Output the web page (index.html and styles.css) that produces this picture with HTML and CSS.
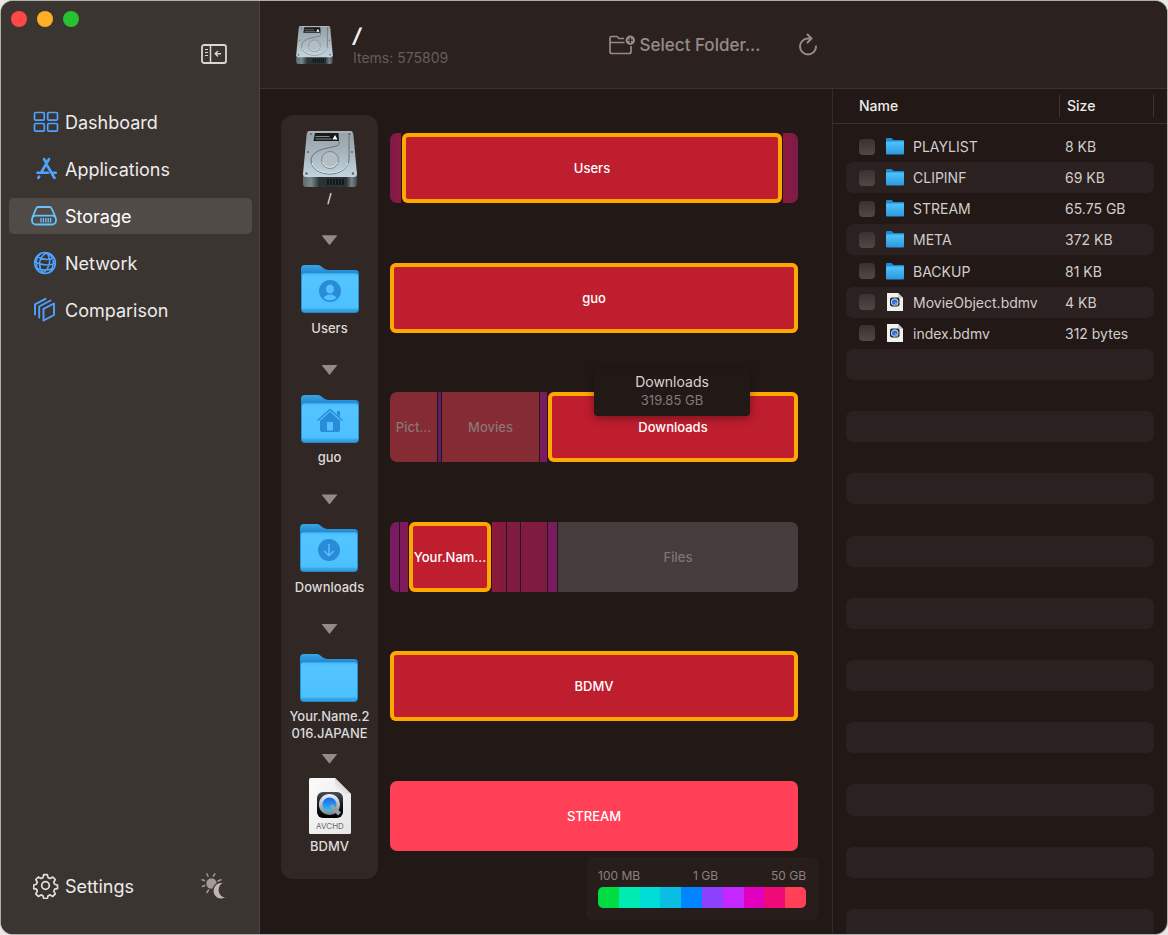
FILE: index.html
```html
<!DOCTYPE html>
<html lang="en">
<head>
<meta charset="utf-8">
<title>Storage</title>
<link rel="stylesheet" href="styles.css">
</head>
<body>
<svg class="defs" aria-hidden="true">
  <defs>
    <linearGradient id="g-plate" x1="0" y1="0" x2="0" y2="1"><stop offset="0" stop-color="#96a0a5"/><stop offset=".5" stop-color="#a9b6be"/><stop offset="1" stop-color="#c2d5de"/></linearGradient>
    <linearGradient id="g-base" x1="0" y1="0" x2="1" y2="0"><stop offset="0" stop-color="#5f6b6e"/><stop offset=".15" stop-color="#7d888b"/><stop offset=".3" stop-color="#2b3335"/><stop offset=".8" stop-color="#2b3335"/><stop offset=".9" stop-color="#76838a"/><stop offset="1" stop-color="#3f494c"/></linearGradient>
    <linearGradient id="g-front" x1="0" y1="0" x2="0" y2="1"><stop offset="0" stop-color="#46b9fb"/><stop offset=".1" stop-color="#53c4ff"/><stop offset=".88" stop-color="#4dc1ff"/><stop offset=".93" stop-color="#35a5e6"/><stop offset="1" stop-color="#2d9add"/></linearGradient>
    <linearGradient id="g-mini" x1="0" y1="0" x2="0" y2="1"><stop offset="0" stop-color="#51c4fb"/><stop offset="1" stop-color="#2b97dd"/></linearGradient>
    <linearGradient id="g-back" x1="0" y1="0" x2="0" y2="1"><stop offset="0" stop-color="#3aa5e4"/><stop offset=".25" stop-color="#1a7fcb"/></linearGradient>
    <linearGradient id="g-page" x1="0" y1="0" x2="1" y2="1"><stop offset="0" stop-color="#fbfbfb"/><stop offset="1" stop-color="#e6e6e6"/></linearGradient>
    <linearGradient id="g-fold" x1="0" y1="1" x2="1" y2="0"><stop offset="0" stop-color="#ffffff"/><stop offset="1" stop-color="#b4b4b4"/></linearGradient>
    <linearGradient id="g-tile" x1="0" y1="0" x2="0" y2="1"><stop offset="0" stop-color="#4a4f55"/><stop offset=".5" stop-color="#15171a"/><stop offset="1" stop-color="#000"/></linearGradient>
    <linearGradient id="g-ring" x1="0" y1="0" x2="0" y2="1"><stop offset="0" stop-color="#e6ebf5"/><stop offset="1" stop-color="#858b91"/></linearGradient>
    <linearGradient id="g-lens" x1="0" y1="0" x2="0" y2="1"><stop offset="0" stop-color="#1a55e8"/><stop offset="1" stop-color="#2fd4f7"/></linearGradient>
    <symbol id="disk" viewBox="0 0 54 56">
      <path d="M0 45h54v8q0 3-3 3H3q-3 0-3-3z" fill="url(#g-base)"/>
      <path d="M25 48v6M28 48v6M31 48v6M34 48v6M37 48v6M40 48v6" stroke="#0b0e0f" stroke-width="1.4"/>
      <path d="M7 0h40q3 0 3.300 3L54 43q0 3-3 3H3q-3 0-3-3L3.700 3Q4 0 7 0z" fill="url(#g-plate)"/>
      <path d="M5 1h44" stroke="#c9d1d4" stroke-width=".8"/>
      <path d="M36 10.500v3C34 17 9 16 8 29c0 9 9 14 19 14s19-6 19-15V2.500" fill="none" stroke="#64717a" stroke-width="1"/>
      <path d="M9 32c2 7 10 10 18 10s16-4 18-10" fill="none" stroke="#dce7ef" stroke-width="1"/>
      <circle cx="27" cy="29" r="8.500" fill="#b2bdc4" stroke="#7b878e"/>
      <path d="M19.500 31a8 8 0 0 0 15 0" fill="none" stroke="#dfe8ee"/>
      <path d="M12 2h23.500l.5 8H10.500z" fill="#17191b"/>
      <path d="M12.500 5.500h14M12.500 8h16" stroke="#868b8e" stroke-width="1"/>
      <path d="M32 4l2.500 4.500h-5z" fill="#fff"/>
      <g fill="#56626a"><circle cx="8" cy="3" r=".9"/><circle cx="46.500" cy="3" r=".9"/><circle cx="5" cy="21" r=".9"/><circle cx="49" cy="21" r=".9"/><circle cx="3.500" cy="42.500" r="1.200"/><circle cx="50" cy="42.500" r="1.200"/></g>
    </symbol>
    <symbol id="folder" viewBox="0 0 58 48">
      <path d="M0 4q0-4 4-4h13q2 0 4 2 3 3 6 3h27q4 0 4 4v34H0z" fill="url(#g-back)"/>
      <path d="M.5 11q0-3 3-3h51q3 0 3 3v33.500q0 3-3 3h-51q-3 0-3-3z" fill="url(#g-front)" stroke="#2690d6" stroke-width=".8"/>
    </symbol>
    <symbol id="folder-mini" viewBox="0 0 18 17">
      <path d="M0 1q0-1 1-1h4.500l2 2H17q1 0 1 1v10H0z" fill="#1f8bd6"/>
      <path d="M0 3.500h18V15.500q0 1-1 1H1q-1 0-1-1z" fill="url(#g-mini)"/>
    </symbol>
    <symbol id="doc" viewBox="0 0 42 56">
      <path d="M1.500 0H26L42 16v38.500q0 1.500-1.500 1.500h-39Q0 56 0 54.500v-53Q0 0 1.500 0z" fill="url(#g-page)"/>
      <path d="M26 0l16 16H28q-2 0-2-2z" fill="url(#g-fold)"/>
      <rect x="8" y="14" width="26" height="26" rx="6" fill="url(#g-tile)"/>
      <circle cx="20.500" cy="26.500" r="8.800" fill="url(#g-lens)" stroke="url(#g-ring)" stroke-width="3.600"/>
      <path d="M22 27.500l8.500 8.500" stroke="#989da3" stroke-width="4"/>
    </symbol>
  </defs>
</svg>

<div class="window">
  <aside class="sidebar">
    <div class="lights"><span class="light red"></span><span class="light amber"></span><span class="light green"></span></div>
    <button class="icon-button collapse" aria-label="Hide sidebar">
      <svg width="26" height="20" viewBox="0 0 26 20" fill="none" stroke="currentColor"><rect x="1" y="1" width="24" height="18" rx="2" stroke-width="1.800"/><path d="M9.500 1v18" stroke-width="1.500"/><path d="M4 5.500h3M4 8.500h3M4 11.500h3" stroke-width="1.200"/><path d="M20 9.800h-5.500M17 7l-2.800 2.800L17 12.600" stroke-width="1.400"/></svg>
    </button>
    <nav class="nav">
      <a class="nav-item" href="#dashboard">
        <svg class="nav-icon" viewBox="0 0 26 26" fill="none" stroke="currentColor" stroke-width="1.700"><rect x="1.500" y="3.500" width="9.800" height="7.600" rx="1.200"/><rect x="14.700" y="3.500" width="9.800" height="7.600" rx="1.200"/><rect x="1.500" y="14.500" width="9.800" height="7.600" rx="1.200"/><rect x="14.700" y="14.500" width="9.800" height="7.600" rx="1.200"/></svg>
        Dashboard</a>
      <a class="nav-item" href="#applications">
        <svg class="nav-icon" viewBox="0 0 26 26" fill="none" stroke="currentColor" stroke-width="2.600" stroke-linecap="round"><path d="M11 3l1.800 3.200M16 3L8.200 16.500M4.500 16.800h10.500M14.200 9.500l7.300 12.500M19.800 16.800h3M6.200 20.500l-.9 1.500"/></svg>
        Applications</a>
      <a class="nav-item active" href="#storage" aria-current="page">
        <svg class="nav-icon drive" viewBox="0 0 26 26" fill="none" stroke="currentColor" stroke-width="1.800" stroke-linejoin="round"><path d="M1.300 14.500L5 5.800Q5.700 4 7.500 4h10.800q1.800 0 2.500 1.800l3.900 8.700"/><rect x="1" y="12.700" width="24" height="8.800" rx="4"/><path d="M10 15v4.500M12.400 15v4.500M14.800 15v4.500M17.200 15v4.500M19.600 15v4.500" stroke-width="1.300"/></svg>
        Storage</a>
      <a class="nav-item" href="#network">
        <svg class="nav-icon" viewBox="0 0 26 26" fill="none" stroke="currentColor" stroke-width="1.500"><circle cx="12" cy="13" r="10.400"/><path d="M14 2.800C5 7 5 17 10 23.200M14 2.800c4 6 4 14-4 20.400M14 2.800c8 4 7 12 4 18.500M4 6.500q9 5 17 1.500M1.600 12q10 5 20.800 1.500M3.500 18.500q9 3 17 0M8 3.500C2 8 3 14 4.500 19.500"/></svg>
        Network</a>
      <a class="nav-item" href="#comparison">
        <svg class="nav-icon" viewBox="0 0 26 26" fill="none" stroke="currentColor" stroke-width="1.900" stroke-linejoin="round" stroke-linecap="round"><path d="M10.500 11.800l10.500-5.300v11.500l-10.500 5.500zM6.200 20.500V9.500L17.500 3.500M2 17.500V7.300L12.500 1.800"/></svg>
        Comparison</a>
    </nav>
    <div class="sidebar-foot">
      <a class="nav-item plain" href="#settings">
        <svg class="nav-icon" viewBox="0 0 26 26" fill="none" stroke="currentColor" stroke-width="1.700" stroke-linejoin="round"><circle cx="12.500" cy="12.500" r="3.800"/><path d="M10.700 1.700h3.600l.8 2.900 2 .9 2.700-1.500 2.500 2.500-1.500 2.700.8 2 2.900.8v3.600l-2.900.6-.8 2 1.500 2.700-2.500 2.500-2.700-1.500-2 .9-.8 2.700h-3.600l-.7-2.700-2-.9-2.700 1.500-2.500-2.500 1.500-2.700-.9-2-2.700-.6v-3.600l2.700-.8.9-2-1.500-2.700 2.500-2.500L8 5.500l2-.9z"/></svg>
        Settings</a>
      <button class="icon-button theme" aria-label="Switch appearance">
        <svg width="26" height="27" viewBox="0 0 26 27"><circle cx="10.500" cy="10.500" r="5.200" fill="#a49a98"/><path d="M7 3.200L6 1M12.500 3L13.800.8M3.500 7.500L1.200 6.800M3.800 12.500L1.500 13.500M7.500 17L6 19.500M17 8l3-1.200" stroke="#a49a98" stroke-width="1.500" stroke-linecap="round"/><path d="M20.500 9.500a8.300 8.300 0 1 0 5.300 14.500C18 25 15 14 23 9.800q-1-.4-2.500-.3z" fill="#c0b5b3" stroke="#3b3532" stroke-width="1.200"/></svg>
      </button>
    </div>
  </aside>

  <div class="main">
    <header class="toolbar">
      <div class="volume">
        <svg class="volume-icon"><use href="#disk"/></svg>
        <div><h1 class="volume-name">/</h1><p class="volume-items">Items: 575809</p></div>
      </div>
      <div class="actions">
        <button class="text-button"><svg width="26" height="20" viewBox="0 0 26 20" fill="none" stroke="currentColor" stroke-width="1.700" stroke-linejoin="round"><path d="M15 3.500H10L8 1.500H2.500Q1 1.500 1 3v13.500q0 2 2 2h17q2 0 2-2V11M1 7.500h14.500"/><circle cx="21.300" cy="5.200" r="4.700" fill="currentColor" stroke="none"/><path d="M21.300 2.500v5.400M18.600 5.200H24" stroke="#2b211f" stroke-width="1.300"/></svg>Select Folder...</button>
        <button class="icon-button reload" aria-label="Reload"><svg width="20" height="24" viewBox="0 0 20 24" fill="none" stroke="currentColor" stroke-width="2" stroke-linecap="round" stroke-linejoin="round"><path d="M13.500 5.500H10A8 8 0 1 0 18 13.500M9.500 1.500l4 4-4 4"/></svg></button>
      </div>
    </header>

    <div class="content">
      <section class="map" aria-label="Disk usage">
        <ol class="rail">
          <li class="level"><span class="level-icon"><svg class="ic-disk"><use href="#disk"/></svg></span><span class="level-name">/</span></li>
          <li class="arrow" aria-hidden="true"></li>
          <li class="level"><span class="level-icon"><svg class="ic-folder" viewBox="0 0 58 48"><use href="#folder" width="58" height="48"/><circle cx="29" cy="26" r="11" fill="#2a8cd8"/><ellipse cx="29" cy="24" rx="4" ry="4.500" fill="#52c3ff"/><path d="M22.500 33q2.500-3.500 6.500-3.500t6.500 3.500q-6.500 4.500-13 0z" fill="#52c3ff"/></svg></span><span class="level-name">Users</span></li>
          <li class="arrow" aria-hidden="true"></li>
          <li class="level"><span class="level-icon"><svg class="ic-folder" viewBox="0 0 58 48"><use href="#folder" width="58" height="48"/><path d="M19 25.500l10-9 10 9V35q0 2-2 2H21q-2 0-2-2z" fill="#2a8cd8"/><path d="M16.500 25.500L29 14.500l12.500 11" fill="none" stroke="#2a8cd8" stroke-width="1.600"/><path d="M19.500 24.700L29 16.300l9.500 8.400" fill="none" stroke="#52c3ff" stroke-width=".8"/><path d="M36 16h3v6l-3-2.500z" fill="#2a8cd8"/><path d="M26 27h6v8.500h-6z" fill="#52c3ff"/></svg></span><span class="level-name">guo</span></li>
          <li class="arrow" aria-hidden="true"></li>
          <li class="level"><span class="level-icon"><svg class="ic-folder" viewBox="0 0 58 48"><use href="#folder" width="58" height="48"/><circle cx="29" cy="26" r="11" fill="#2a8cd8"/><path d="M29 20.500v11M24.500 27.200l4.500 4.500 4.500-4.500" fill="none" stroke="#52c3ff" stroke-width="1.500" stroke-linecap="round"/></svg></span><span class="level-name">Downloads</span></li>
          <li class="arrow" aria-hidden="true"></li>
          <li class="level"><span class="level-icon"><svg class="ic-folder"><use href="#folder"/></svg></span><span class="level-name">Your.Name.2<br>016.JAPANE</span></li>
          <li class="arrow" aria-hidden="true"></li>
          <li class="level"><span class="level-icon"><svg class="ic-doc" viewBox="0 0 42 56"><use href="#doc" width="42" height="56"/><text class="doc-type" x="21" y="51">AVCHD</text></svg></span><span class="level-name">BDMV</span></li>
        </ol>

        <div class="bars">
          <div class="bar"><span class="seg first wine-l" style="flex-grow:11"></span><button class="seg picked" style="flex-grow:380">Users</button><span class="seg last wine-r" style="flex-grow:15"></span></div>
          <div class="bar"><button class="seg picked" style="flex-grow:408">guo</button></div>
          <div class="bar"><button class="seg first dim" style="flex-grow:47">Pict...</button><span class="seg violet" style="flex-grow:3"></span><button class="seg dim" style="flex-grow:97">Movies</button><span class="seg plum" style="flex-grow:7"></span><button class="seg picked" style="flex-grow:250">Downloads</button>
            <div class="tip" role="tooltip"><span class="tip-name">Downloads</span><span class="tip-size">319.85 GB</span></div>
          </div>
          <div class="bar"><span class="seg first plum" style="flex-grow:9"></span><span class="seg plum-r" style="flex-grow:8"></span><button class="seg picked" style="flex-grow:82">Your.Nam...</button><span class="seg wine-l2" style="flex-grow:14"></span><span class="seg wine" style="flex-grow:13"></span><span class="seg wine" style="flex-grow:26"></span><span class="seg plum" style="flex-grow:9"></span><button class="seg last files" style="flex-grow:240">Files</button></div>
          <div class="bar"><button class="seg picked" style="flex-grow:408">BDMV</button></div>
          <div class="bar"><button class="seg first last hot" style="flex-grow:408">STREAM</button></div>
        </div>

        <div class="legend">
          <div class="legend-labels"><span>100 MB</span><span>1 GB</span><span>50 GB</span></div>
          <div class="scale"><i class="c1"></i><i class="c2"></i><i class="c3"></i><i class="c4"></i><i class="c5"></i><i class="c6"></i><i class="c7"></i><i class="c8"></i><i class="c9"></i><i class="c10"></i></div>
        </div>
      </section>

      <section class="files-pane">
        <table class="table">
          <thead><tr><th scope="col">Name</th><th scope="col" class="size">Size</th></tr></thead>
          <tbody>
            <tr><td><label><input type="checkbox"><svg class="mini"><use href="#folder-mini"/></svg>PLAYLIST</label></td><td>8 KB</td></tr>
            <tr><td><label><input type="checkbox"><svg class="mini"><use href="#folder-mini"/></svg>CLIPINF</label></td><td>69 KB</td></tr>
            <tr><td><label><input type="checkbox"><svg class="mini"><use href="#folder-mini"/></svg>STREAM</label></td><td>65.75 GB</td></tr>
            <tr><td><label><input type="checkbox"><svg class="mini"><use href="#folder-mini"/></svg>META</label></td><td>372 KB</td></tr>
            <tr><td><label><input type="checkbox"><svg class="mini"><use href="#folder-mini"/></svg>BACKUP</label></td><td>81 KB</td></tr>
            <tr><td><label><input type="checkbox"><svg class="mini page" viewBox="0 0 16 18"><path d="M0 0h11l5 5v13H0z" fill="#f1f1f1"/><path d="M11 0l5 5h-5z" fill="#cfcfcf"/><rect x="3" y="4.500" width="9.500" height="9" rx="2" fill="#202429"/><circle cx="7.700" cy="9" r="3.200" fill="#1d6ef0" stroke="#bcc5d2" stroke-width="1.200"/><path d="M8 9.500l3 3" stroke="#a5adb7" stroke-width="1.200"/></svg>MovieObject.bdmv</label></td><td>4 KB</td></tr>
            <tr><td><label><input type="checkbox"><svg class="mini page" viewBox="0 0 16 18"><path d="M0 0h11l5 5v13H0z" fill="#f1f1f1"/><path d="M11 0l5 5h-5z" fill="#cfcfcf"/><rect x="3" y="4.500" width="9.500" height="9" rx="2" fill="#202429"/><circle cx="7.700" cy="9" r="3.200" fill="#1d6ef0" stroke="#bcc5d2" stroke-width="1.200"/><path d="M8 9.500l3 3" stroke="#a5adb7" stroke-width="1.200"/></svg>index.bdmv</label></td><td>312 bytes</td></tr>
            <tr></tr><tr></tr><tr></tr><tr></tr><tr></tr><tr></tr><tr></tr><tr></tr><tr></tr><tr></tr><tr></tr><tr></tr><tr></tr><tr></tr><tr></tr><tr></tr><tr></tr><tr></tr><tr></tr>
          </tbody>
        </table>
      </section>
    </div>
  </div>
</div>
</body>
</html>
```

FILE: styles.css
```css
* { box-sizing: border-box; }
body {
  margin: 0;
  padding: 1px;
  height: 100vh;
  overflow: hidden;
  background: #e9e9e8;
  font-family: Inter, "Liberation Sans", sans-serif;
  font-size: 14px;
  color: #d2cdcb;
}
button { border: 0; padding: 0; background: none; font: inherit; color: inherit; }
h1, p, ol { margin: 0; padding: 0; }
a { color: inherit; text-decoration: none; }
svg { flex: none; display: block; }
.defs { position: absolute; width: 0; height: 0; }

.window {
  display: flex;
  height: 100%;
  border-radius: 12px;
  overflow: hidden;
  background: #221917;
  box-shadow: 0 0 0 1px #aeaeac;
}

/* Sidebar */
.sidebar {
  flex: none;
  width: 259px;
  display: flex;
  flex-direction: column;
  background: #3b3532;
  border-right: 1px solid #4a4341;
  padding: 10px 7px 30px 8px;
}
.lights { display: flex; gap: 10px; padding-left: 2px; }
.light { width: 16px; height: 16px; border-radius: 50%; }
.red { background: #ff4747; }
.amber { background: #ffae26; }
.green { background: #29c132; }
.icon-button { display: flex; }
.collapse { align-self: flex-end; margin: 17px 25px 0 0; color: #dad6d4; }
.nav { display: flex; flex-direction: column; gap: 11px; margin-top: 40px; }
.nav-item {
  display: flex;
  align-items: center;
  gap: 6px;
  height: 36px;
  padding-left: 24px;
  border-radius: 5px;
  font-size: 18px;
  color: #eeebea;
}
.nav-item.active { background: #514b48; color: #fff; }
.nav-icon { width: 26px; height: 26px; color: #4ea3ff; }
.nav-icon.drive { color: #62c4ff; margin: 0 2px 0 -2px; }
.plain .nav-icon { color: #e2dedc; }
.sidebar-foot { display: flex; align-items: center; justify-content: space-between; margin-top: auto; }
.theme { margin-right: 25px; }

/* Toolbar */
.main { flex: 1; min-width: 0; display: flex; flex-direction: column; }
.toolbar {
  display: grid;
  grid-template-columns: 1fr auto 1fr;
  align-items: center;
  height: 88px;
  background: #2b211f;
  border-bottom: 1px solid #3b312f;
}
.volume { display: flex; align-items: center; gap: 20px; padding-left: 36px; }
.volume-icon { width: 37px; height: 38px; }
.volume-name { font-size: 20px; line-height: 26px; font-weight: 700; font-style: italic; color: #f4f1f0; }
.volume-items { font-size: 14px; line-height: 18px; color: #665e5c; }
.actions { display: flex; align-items: center; gap: 38px; color: #978a88; }
.text-button { display: flex; align-items: center; gap: 5px; font-size: 17px; font-weight: 500; }

/* Usage map */
.content { flex: 1; min-height: 0; display: flex; }
.map {
  position: relative;
  flex: 1;
  min-width: 0;
  display: flex;
  gap: 12px;
  padding: 26px 34px 55px 21px;
}
.rail {
  flex: none;
  width: 97px;
  display: flex;
  flex-direction: column;
  align-items: center;
  justify-content: space-between;
  list-style: none;
  padding: 12px 0 7px;
  border-radius: 12px;
  background: #312826;
}
.level { height: 97px; text-align: center; }
.level-icon { display: flex; align-items: center; justify-content: center; height: 63px; }
.level-name { display: block; font-size: 13px; line-height: 17px; font-weight: 500; color: #dedad8; }
.ic-disk { width: 54px; height: 56px; }
.ic-folder { width: 58px; height: 48px; margin-top: 2px; }
.ic-doc { width: 42px; height: 56px; }
.doc-type { font-size: 8px; text-anchor: middle; fill: #6a6a6a; }
.arrow { width: 16px; height: 10px; background: #938b89; clip-path: polygon(0 0, 100% 0, 50% 100%); }

.bars {
  flex: 1;
  min-width: 0;
  display: flex;
  flex-direction: column;
  justify-content: space-between;
  padding: 18px 0 28px;
}
.bar { position: relative; display: flex; gap: 1px; height: 70px; font-size: 13px; font-weight: 500; }
.seg { flex: 1 1 0; min-width: 0; white-space: nowrap; color: #8a7674; }
.first { border-top-left-radius: 7px; border-bottom-left-radius: 7px; }
.last { border-top-right-radius: 7px; border-bottom-right-radius: 7px; }
.picked { background: #bf1e2e; box-shadow: inset 0 0 0 4px #ffa800; border-radius: 6px; color: #fff; }
.dim { background: #852b33; }
.files { background: #443d3c; color: #7d7573; }
.hot { background: #ff4056; color: #fff; }
.violet { background: #611b6b; }
.plum { background: #7a1a61; }
.plum-r { background: linear-gradient(90deg, #7a1a61, #851a4a); }
.wine { background: #7f1a41; }
.wine-l { background: linear-gradient(90deg, #7d1a4c, #8c1a3e); }
.wine-r { background: linear-gradient(90deg, #8c1a3c, #7d1a4c); }
.wine-l2 { background: linear-gradient(90deg, #8c1a3a, #7f1a41); }

.tip {
  position: absolute;
  right: 48px;
  bottom: 46px;
  width: 156px;
  padding: 3px 0 7px;
  display: flex;
  flex-direction: column;
  align-items: center;
  border-radius: 4px;
  background: #221917;
  box-shadow: 0 2px 10px rgba(0, 0, 0, .4);
  font-weight: 400;
}
.tip-name { font-size: 14px; line-height: 19px; color: #d8d3d1; }
.tip-size { font-size: 13px; line-height: 18px; color: #82797a; }

.legend {
  position: absolute;
  right: 14px;
  bottom: 14px;
  width: 232px;
  padding: 10px 12px 12px;
  border-radius: 7px;
  background: #271e1c;
}
.legend-labels { display: flex; justify-content: space-between; font-size: 12px; line-height: 18px; color: #8d807e; }
.scale { display: flex; height: 21px; margin-top: 2px; border-radius: 5px; overflow: hidden; }
.scale i { flex: 1; }
.c1 { background: #00dc41; }
.c2 { background: #00ebb2; }
.c3 { background: #00dcd7; }
.c4 { background: #0abde3; }
.c5 { background: #0085ff; }
.c6 { background: #8c41ff; }
.c7 { background: #c528ff; }
.c8 { background: #e200c0; }
.c9 { background: #f00a78; }
.c10 { background: #ff4056; }

/* File table */
.files-pane { flex: none; width: 335px; border-left: 1px solid #352b29; overflow: hidden; }
.table { display: flex; flex-direction: column; height: 100%; }
.table thead { display: block; padding: 6px 13px; border-bottom: 1px solid #392f2d; }
.table tr { display: grid; grid-template-columns: 1fr 94px; align-items: center; }
.table th {
  padding: 0 0 0 13px;
  text-align: left;
  font-size: 14px;
  line-height: 22px;
  font-weight: 500;
  color: #efeceb;
  border-right: 1px solid #3f3533;
}
.table th.size { padding-left: 7px; }
.table tbody { flex: 1; display: grid; grid-auto-rows: 1fr; padding: 7px 13px 0; margin-bottom: -6px; }
.table tbody tr { border-radius: 7px; }
.table tbody tr:nth-child(even) { background: #2b2120; }
.table td { padding: 0 0 0 5px; }
.table td:first-child { padding-left: 13px; }
.table label { display: flex; align-items: center; }
.table input {
  appearance: none;
  width: 16px;
  height: 16px;
  margin: 0 11px 0 0;
  border-radius: 4px;
  background: linear-gradient(#3a3230, #524846);
}
.mini { width: 18px; height: 17px; margin-right: 9px; }
.mini.page { width: 16px; height: 18px; margin: 0 10px 0 1px; }
```
